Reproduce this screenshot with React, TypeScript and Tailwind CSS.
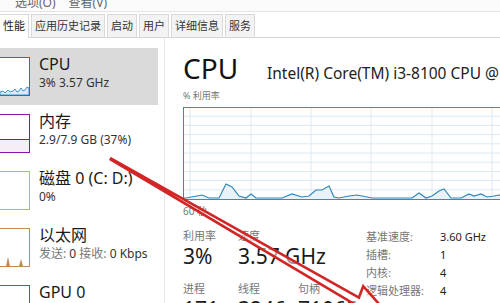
import React from 'react';

const tabs = ['性能', '应用历史记录', '启动', '用户', '详细信息', '服务'];

const cpuLine: [number, number][] = [
  [185, 199], [187, 199], [203, 196], [210, 199], [220, 199], [227, 185], [233, 188],
  [240, 197], [247, 199], [252, 195], [257, 199], [270, 199], [283, 199], [293, 195],
  [303, 198], [310, 197], [317, 191], [323, 191], [330, 187], [335, 198], [340, 199],
  [350, 197], [358, 196], [363, 197], [373, 199], [387, 199], [403, 199], [413, 199],
  [420, 194], [427, 199], [433, 197], [440, 192], [445, 190], [452, 199], [462, 199],
  [470, 195], [475, 197], [482, 195], [488, 198], [495, 197], [500, 196], [515, 197],
];

function Thumb({ color, children }: { color: string; children?: React.ReactNode }) {
  return (
    <div
      className="w-[30px] h-[39px] border-y border-r bg-white overflow-hidden"
      style={{ borderColor: color }}
    >
      <svg width="29" height="37" viewBox="0 0 29 37">
        {children}
      </svg>
    </div>
  );
}

function SideItem({
  selected,
  title,
  sub,
  thumb,
}: {
  selected?: boolean;
  title: string;
  sub?: React.ReactNode;
  thumb: React.ReactNode;
}) {
  return (
    <div className={`h-[57px] w-[158px] flex pt-[9px] ${selected ? 'bg-[#dadada]' : ''}`}>
      <div className="shrink-0">{thumb}</div>
      <div className="ml-[9px] -mt-[4px]">
        <p className="text-[16px] leading-[22px] text-[#1a1a1a]">{title}</p>
        {sub && <p className="text-[12px] leading-[16px] text-[#333]">{sub}</p>}
      </div>
    </div>
  );
}

function Stat({ label, value, w }: { label: string; value: string; w: string }) {
  return (
    <div className={`${w} whitespace-nowrap`}>
      <p className="text-[11px] leading-[14px] text-[#777]">{label}</p>
      <p className="text-[21px] leading-[26px] text-[#1a1a1a]">{value}</p>
    </div>
  );
}

export default function App() {
  const hLines = Array.from({ length: 9 }, (_, i) => 108 + (i + 1) * 9.2);
  const vLines = [191, 252, 312, 372, 433, 493];
  const pts = cpuLine.map(([x, y]) => `${x},${y}`).join(' ');

  return (
    <div className="relative w-[500px] h-[303px] overflow-hidden bg-white font-['Noto_Sans','Noto_Sans_CJK_SC',sans-serif]">
      {/* menu */}
      <div className="h-[12px] overflow-hidden border-b border-[#e3e3e3] bg-[#fbfbfb]">
        <div className="-mt-[5px] flex gap-[13px] pl-[15px] text-[12px] leading-[16px] text-[#666]">
          <span>选项(O)</span>
          <span>查看(V)</span>
        </div>
      </div>

      {/* tabs */}
      <div className="h-[26px] flex items-end border-b border-[#d5d5d5] bg-white">
        {tabs.map((t, i) => (
          <div
            key={t}
            className={`flex items-center px-[3px] text-[11px] border-r border-t border-[#d9d9d9] ${
              i === 0 ? 'bg-white -mb-px h-[24px] text-[#222]' : 'h-[23px] bg-[#f3f3f3] text-[#333] ml-[2px] border-l'
            }`}
          >
            {t}
          </div>
        ))}
      </div>

      <div className="flex">
        {/* sidebar */}
        <div className="w-[165px] h-[265px] border-r border-[#e6e6e6] pt-[10px] shrink-0">
          <SideItem
            selected
            title="CPU"
            sub="3% 3.57 GHz"
            thumb={
              <Thumb color="#117dbb">
                <polygon
                  points="0,37 0,34 3,33 5,35 8,32 10,34 13,33 15,31 17,34 19,33 21,30 23,33 25,32 27,29 29,30 29,37"
                  fill="#dbe9f4"
                  stroke="#117dbb"
                  strokeWidth="0.8"
                />
              </Thumb>
            }
          />
          <SideItem
            title="内存"
            sub="2.9/7.9 GB (37%)"
            thumb={
              <Thumb color="#8b12ae">
                <rect x="0" y="24" width="29" height="13" fill="#f4eef6" />
                <line x1="0" y1="24.5" x2="29" y2="24.5" stroke="#8b12ae" strokeWidth="1" />
              </Thumb>
            }
          />
          <SideItem title="磁盘 0 (C: D:)" sub="0%" thumb={<Thumb color="#9bc47a" />} />
          <SideItem
            title="以太网"
            sub={
              <span className="text-[#777]">
                发送: <span className="text-[#333]">0</span> 接收: <span className="text-[#333]">0 Kbps</span>
              </span>
            }
            thumb={
              <Thumb color="#c08a5a">
                <polygon points="6,37 8,28 10,37" fill="#c08a5a" />
                <polygon points="19,37 21,30 23,37" fill="#c08a5a" />
              </Thumb>
            }
          />
          <SideItem title="GPU 0" thumb={<Thumb color="#117dbb" />} />
        </div>

        {/* main */}
        <div className="pl-[18px] pt-[12px]">
          <div className="flex items-baseline">
            <span className="text-[28px] leading-[36px] text-[#111] w-[84px]">CPU</span>
            <span className="text-[15.5px] text-[#222] whitespace-nowrap">Intel(R) Core(TM) i3-8100 CPU @ 3.60GHz</span>
          </div>
          <p className="mt-[4px] text-[9px] leading-[12px] text-[#777]">% 利用率</p>
          <div className="mt-[5px] w-[340px] h-[93px] border border-[#3b89b4]">
            <svg width="340" height="91" viewBox="185 109 340 91">
              {hLines.map((y) => (
                <line key={y} x1="185" x2="525" y1={y} y2={y} stroke="#dce9f2" strokeWidth="1" />
              ))}
              {vLines.map((x) => (
                <line key={x} x1={x} x2={x} y1="108" y2="200" stroke="#dce9f2" strokeWidth="1" />
              ))}
              <polygon points={`185,200 ${pts} 525,200`} fill="#eaf2f9" />
              <polyline points={pts} fill="none" stroke="#2e86b8" strokeWidth="1.2" />
            </svg>
          </div>
          <p className="mt-[4px] text-[10px] leading-[14px] text-[#777]">60 秒</p>

          <div className="flex mt-[11px]">
            <div className="w-[183px]">
              <div className="flex">
                <Stat w="w-[55px]" label="利用率" value="3%" />
                <Stat w="w-[60px]" label="速度" value="3.57 GHz" />
              </div>
              <div className="flex mt-[13px]">
                <Stat w="w-[55px]" label="进程" value="171" />
                <Stat w="w-[60px]" label="线程" value="3246" />
                <Stat w="w-[60px]" label="句柄" value="71065" />
              </div>
            </div>
            <div className="text-[11px] leading-[18px] -mt-[1px]">
              {[
                ['基准速度:', '3.60 GHz'],
                ['插槽:', '1'],
                ['内核:', '4'],
                ['逻辑处理器:', '4'],
              ].map(([k, v]) => (
                <div key={k} className="flex whitespace-nowrap">
                  <span className="w-[74px] text-[#777]">{k}</span>
                  <span className="text-[#222]">{v}</span>
                </div>
              ))}
            </div>
          </div>
        </div>
      </div>

      {/* annotation arrow */}
      <svg className="absolute inset-0 pointer-events-none" width="500" height="303" viewBox="0 0 500 303">
        <g transform="translate(111 159) rotate(30)">
          <polygon
            points="0,-0.5 284,-4 282,-16 330,0 282,16 284,4 0,0.5"
            fill="#ffffff"
            fillOpacity="0.55"
            stroke="#d22626"
            strokeWidth="2.6"
            strokeLinejoin="miter"
          />
        </g>
      </svg>
    </div>
  );
}
